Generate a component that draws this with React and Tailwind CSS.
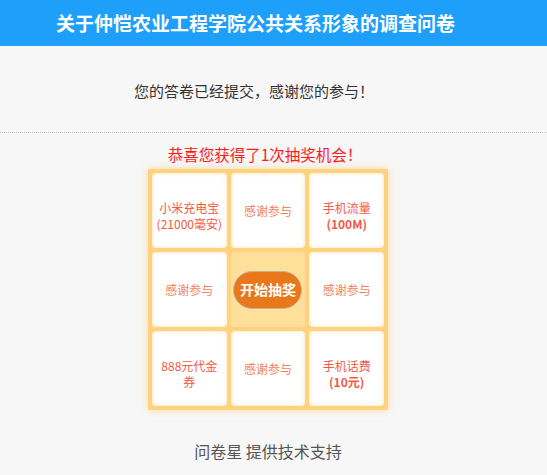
export default function App() {
  const cells = [
    { label: '小米充电宝', sub: '(21000毫安)', prize: true },
    { label: '感谢参与' },
    { label: '手机流量', sub: '(100M)', prize: true, bold: true },
    { label: '感谢参与' },
    { center: true },
    { label: '感谢参与' },
    { label: '888元代金', sub: '券', prize: true },
    { label: '感谢参与' },
    { label: '手机话费', sub: '(10元)', prize: true, bold: true },
  ];

  return (
    <div
      className="min-h-[475px] bg-[#f7f7f7]"
      style={{ fontFamily: '"Noto Sans CJK SC", "Liberation Sans", sans-serif' }}
    >
      <div className="h-[46px] bg-[#1ea0fa] flex items-center justify-center pr-[36px]">
        <h1 className="text-[19px] leading-[28px] font-bold text-white">
          关于仲恺农业工程学院公共关系形象的调查问卷
        </h1>
      </div>

      <div className="h-[86px] flex items-center justify-center pr-[39px] pt-[4px]">
        <p className="text-[15px] text-[#333]">您的答卷已经提交，感谢您的参与！</p>
      </div>

      <div className="border-t border-dotted border-[#c8c8c8]" />

      <div className="w-[536px] flex flex-col items-center">
        <p className="mt-[10px] pr-[6px] text-[15.5px] leading-[22px] text-[#ff1a1a]">恭喜您获得了1次抽奖机会！</p>

        <div className="mt-[4px] w-[240px] h-[241px] bg-[#ffd27e] p-[4px] grid grid-cols-3 grid-rows-3 gap-[4px] shadow-[0_0_8px_rgba(255,200,110,0.6)]">
          {cells.map((c, i) =>
            c.center ? (
              <div key={i} className="bg-[#ffe09a] rounded-[4px] flex items-center justify-center">
                <button className="w-[69px] h-[38px] rounded-[19px] bg-[#e8781a] border border-[#c2b49a] text-white text-[14px] font-bold">
                  开始抽奖
                </button>
              </div>
            ) : (
              <div
                key={i}
                className={
                  c.sub
                    ? 'bg-white rounded-[4px] shadow-[inset_0_0_4px_rgba(255,210,130,0.6)] flex flex-col items-center justify-center px-[3px] pt-[11px] text-center'
                    : 'bg-white rounded-[4px] shadow-[inset_0_0_4px_rgba(255,210,130,0.6)] flex flex-col items-center justify-center px-[3px] text-center'
                }
              >
                <span
                  className={
                    c.prize
                      ? 'text-[12px] leading-[16px] text-[#f25a45]'
                      : 'text-[12px] leading-[16px] text-[#f2845f]'
                  }
                >
                  {c.label}
                </span>
                {c.sub && (
                  <span
                    className={
                      c.bold
                        ? 'text-[12px] leading-[16px] font-bold text-[#f25a45] whitespace-nowrap'
                        : 'text-[12px] leading-[16px] text-[#f25a45] whitespace-nowrap'
                    }
                  >
                    {c.sub}
                  </span>
                )}
              </div>
            )
          )}
        </div>

        <p className="mt-[30px] text-[16px] leading-[22px] text-[#555]">问卷星 提供技术支持</p>
      </div>
    </div>
  );
}
